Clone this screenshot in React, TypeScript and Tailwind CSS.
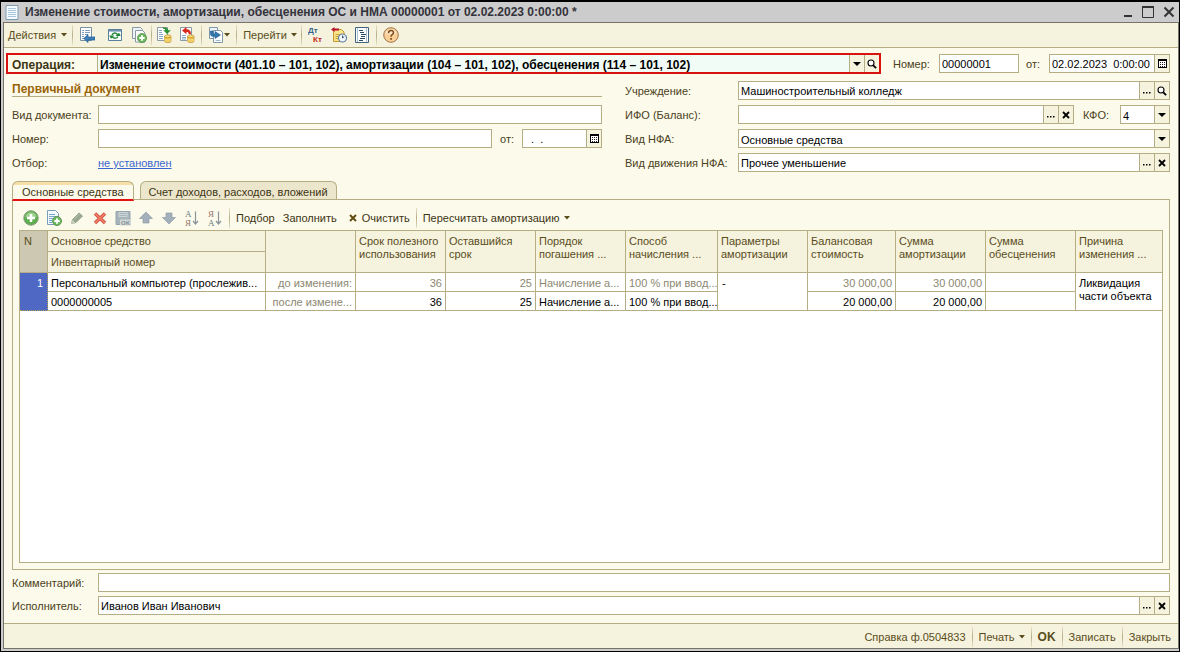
import type { ReactNode } from "react";

type Kids = { children?: ReactNode };

/* ---------- small glyphs ---------- */

const Caret = () => (
  <svg width="6" height="4" viewBox="0 0 6 4" className="shrink-0" aria-hidden="true">
    <path d="M0 0h6L3 3.6z" fill="#594d1c" />
  </svg>
);

const DropGlyph = () => (
  <svg width="8" height="4" viewBox="0 0 8 4" aria-hidden="true">
    <path d="M0 0h8L4 4z" fill="#000" />
  </svg>
);

const MagnifierGlyph = () => (
  <svg width="10" height="10" viewBox="0 0 10 10" aria-hidden="true">
    <circle cx="4" cy="4" r="3" fill="#fff" stroke="#000" strokeWidth="1.1" />
    <path d="M6.3 6.3l2.8 2.8" stroke="#000" strokeWidth="1.8" />
  </svg>
);

const CrossGlyph = ({ color = "#000" }: { color?: string }) => (
  <svg width="8" height="8" viewBox="0 0 8 8" aria-hidden="true">
    <path d="M1 1l6 6M7 1L1 7" stroke={color} strokeWidth="1.8" />
  </svg>
);

const DotsGlyph = () => (
  <svg width="8" height="8" viewBox="0 0 8 8" aria-hidden="true">
    <path d="M0 5h1.5v1.5H0zM3 5h1.5v1.5H3zM6 5h1.5v1.5H6z" fill="#000" />
  </svg>
);

const CalendarGlyph = () => (
  <svg width="9" height="9" viewBox="0 0 9 9" shapeRendering="crispEdges" aria-hidden="true">
    <path d="M0 0h9v9H0z" fill="#000" />
    <path d="M1 2h7v6H1z" fill="#fff" />
    <path
      d="M2 3h1v1H2zM4 3h1v1H4zM6 3h1v1H6zM2 5h1v1H2zM4 5h1v1H4zM6 5h1v1H6zM2 7h1v1H2zM4 7h1v1H4zM6 7h1v1H6z"
      fill="#222"
    />
  </svg>
);

/* ---------- toolbar icons ---------- */

const Icon = ({ children }: Kids) => (
  <svg width="16" height="16" viewBox="0 0 16 16" className="shrink-0" aria-hidden="true">
    {children}
  </svg>
);

const SheetIcon = () => (
  <svg width="14" height="15" viewBox="0 0 14 15" className="shrink-0" aria-hidden="true">
    <path d="M1 .5h12v14H1z" fill="#f4fafd" stroke="#7f9cb0" />
    <path d="M3 3.500h8M3 5.500h8M3 7.500h8M3 9.500h8M3 11.500h8" stroke="#a9c6da" />
  </svg>
);

const SaveCloseIcon = () => (
  <Icon>
    <path d="M1.500.500h11v13h-11z" fill="#fff" stroke="#7890a4" />
    <path d="M3 3.500h2M6 3.500h5M3 5.500h2M6 5.500h5M3 7.500h2M6 7.500h3M3 9.500h2M3 11.500h2" stroke="#7ea0bd" />
    <path d="M4.800 11.500L9 7.500v2.500h7v3H9v2.500z" fill="#3c7fb8" stroke="#1f5c93" strokeWidth=".7" />
  </Icon>
);

const RefreshIcon = () => (
  <Icon>
    <path d="M1.500 2.500h13v11h-13z" fill="#fff" stroke="#5a7f9c" />
    <path d="M1.500 2.500h13v1.500h-13z" fill="#7ea7c8" stroke="#5a7f9c" />
    <path d="M5 8C6 5.500 9 5.500 10.500 7.500M11 9.500c-1 2-4 2.300-5.500.5" fill="none" stroke="#23863b" strokeWidth="1.400" />
    <path d="M8.500 9h5.300L12 5.800zM2.200 8.500h5.300L4 11.800z" fill="#23863b" />
  </Icon>
);

const PlusBadge = () => (
  <>
    <circle cx="11" cy="11" r="4.500" fill="#6fb85f" stroke="#4b8a41" strokeWidth=".8" />
    <path d="M11 8.300v5.400M8.300 11h5.400" stroke="#fff" strokeWidth="1.800" />
  </>
);

const CopyAddIcon = () => (
  <Icon>
    <path d="M1.500.500h8l2 2v9h-10z" fill="#eef4f6" stroke="#8798a4" />
    <path d="M4.500 3.500h7l2.500 2.500v9H4.500z" fill="#fff" stroke="#8798a4" />
    <PlusBadge />
  </Icon>
);

const SheetAddIcon = () => (
  <Icon>
    <path d="M1.500.500h8l3 3v11h-11z" fill="#f4fafd" stroke="#7c9db8" />
    <path d="M3 4.500h6M3 6.500h7M3 8.500h4M3 10.500h3M3 12.500h3" stroke="#7ba6cc" />
    <PlusBadge />
  </Icon>
);

const Coins = () => (
  <>
    <path d="M8.500 9.500v4.500c0 2 6.500 2 6.500 0V9.500z" fill="#edc04a" stroke="#b88d28" strokeWidth=".7" />
    <path d="M8.500 11.500c0 1.700 6.500 1.700 6.500 0M8.500 13c0 1.700 6.500 1.700 6.500 0" fill="none" stroke="#fbe694" strokeWidth=".8" />
    <ellipse cx="11.750" cy="9.300" rx="3.250" ry="1.400" fill="#fbe07a" stroke="#b88d28" strokeWidth=".7" />
  </>
);

const PostIcon = () => (
  <Icon>
    <path d="M1.500.500h10v13h-10z" fill="#fff" stroke="#8b9aa6" />
    <path d="M3 3.500h3M3 5.500h3M3 7.500h4M3 9.500h4M3 11.500h4" stroke="#84a7c4" />
    <path d="M7 .300c3 0 5 1 5 3h2.800L11 7 7.300 3.300h2c0-1.200-1-1.600-2.300-1.600z" fill="#279232" />
    <Coins />
  </Icon>
);

const UnpostIcon = () => (
  <Icon>
    <path d="M1.500.500h11v13h-11z" fill="#fff" stroke="#8b9aa6" />
    <path d="M3 8.500h4M3 10.500h4M3 12h4" stroke="#84a7c4" />
    <path d="M3 3.500L7.500 0v2.300c3 0 4.500 1.500 4.500 5H9.700C9.700 5.500 9 5 7.500 5v2.300z" fill="#d92a1c" />
    <Coins />
  </Icon>
);

const BasedOnIcon = () => (
  <Icon>
    <path d="M1.500.500h8v11h-8z" fill="#eef5fa" stroke="#7f95a8" />
    <path d="M5.500 3.500h7l2 2v10h-9z" fill="#fff" stroke="#7f95a8" />
    <path d="M7.500 13.500h5" stroke="#9bb9d1" />
    <path d="M2.500 4v3c0 1.500 1 2.300 3 2.300h1.500v2.200L12.500 8 7 4.500V7H6c-.8 0-1-.3-1-1V4z" fill="#2f77b0" stroke="#1c578b" strokeWidth=".6" />
  </Icon>
);

const DebitCreditIcon = () => (
  <Icon>
    <text x="0" y="6" fontSize="8" fontWeight="700" fontFamily="Liberation Sans, sans-serif" fill="#33658f">Дт</text>
    <text x="5" y="15" fontSize="8" fontWeight="700" fontFamily="Liberation Sans, sans-serif" fill="#c42b18">Кт</text>
  </Icon>
);

const MovementsIcon = () => (
  <Icon>
    <path d="M2.500 2.500h8l2.500 2.500v9.500H2.500z" fill="#fbe38a" stroke="#c39a32" />
    <path d="M4.500 7.500h5M4.500 9.500h3M4.500 11.500h3" stroke="#c9a23c" />
    <path d="M0 2.500L3.500 0v1.500H8v2H3.500V5z" fill="#b5122a" />
    <circle cx="11.500" cy="11" r="4" fill="#f5fbff" stroke="#61809c" strokeWidth="1.200" />
    <path d="M11.500 8.500V11l1.800-1.500" fill="none" stroke="#34536e" />
  </Icon>
);

const StructureIcon = () => (
  <Icon>
    <path d="M1.500.500h13v15h-13z" fill="#fff" stroke="#41637e" />
    <path d="M3.500 1v14M12.500 1v14" stroke="#a9c3d6" />
    <path d="M5 3.500h4M6 5.500h4M7 7.500h5M7 9.500h4M6 11.500h5M5 13.500h4" stroke="#2b4c66" />
  </Icon>
);

const HelpIcon = () => (
  <Icon>
    <circle cx="8" cy="8" r="7.300" fill="#f9cf97" stroke="#a3744a" />
    <path d="M2.500 6.500a5.700 5.700 0 0 1 11 0c-3 1.300-8 1.300-11 0z" fill="#fde6c6" />
    <path d="M5.500 6.200C5.500 4.500 6.600 3.600 8 3.600s2.500.9 2.500 2.200C10.500 7.500 8 7.500 8 9.800" fill="none" stroke="#7d4a1c" strokeWidth="1.500" />
    <path d="M7.200 11h1.700v1.700H7.200z" fill="#7d4a1c" />
  </Icon>
);

const AddIcon = () => (
  <Icon>
    <circle cx="8" cy="8" r="7.200" fill="#5fae4e" stroke="#7f9a78" />
    <path d="M2.300 7a5.800 5.800 0 0 1 11.400 0c-3 1.300-8.400 1.300-11.400 0z" fill="#9dd08c" />
    <path d="M8 4v8M4 8h8" stroke="#fff" strokeWidth="2.600" />
  </Icon>
);

const PencilIcon = () => (
  <Icon>
    <path d="M2.500 13.500l1-4L10 3l3.500 3L7 12.500z" fill="#98a78f" stroke="#879580" strokeWidth=".8" />
    <path d="M2 14l1.500-4.200L6.500 13z" fill="#c9cfbd" />
    <path d="M5 9.500L10.500 4" stroke="#bcc7b2" />
  </Icon>
);

const DeleteIcon = () => (
  <Icon>
    <path d="M3 3.500l10 9.500M13 3.500L3 13" stroke="#c8493a" strokeWidth="3.200" />
    <path d="M3.200 3.700l9.600 9.100M12.800 3.700L3.200 12.800" stroke="#f4806a" strokeWidth="1.600" />
  </Icon>
);

const SaveRowIcon = () => (
  <Icon>
    <path d="M1 1.500h14v13H1z" fill="#a6b4bb" stroke="#94a4ad" />
    <path d="M3.500 2h9v5h-9z" fill="#cdd5d6" />
    <path d="M4.500 3.500h7M4.500 5.500h7" stroke="#a6b4bb" />
    <path d="M5 9.500h11v6H5z" fill="#d3d8d3" />
    <text x="6" y="15" fontSize="6" fontWeight="700" fontFamily="Liberation Sans, sans-serif" fill="#82939e">OK</text>
  </Icon>
);

const UpIcon = () => (
  <Icon>
    <path d="M8 2l6.500 6.500H11V13H5V8.500H1.500z" fill="#a3b0bb" stroke="#8f9ea8" strokeWidth=".7" />
  </Icon>
);

const DownIcon = () => (
  <Icon>
    <path d="M8 14l6.500-6.500H11V3H5v4.500H1.500z" fill="#a3b0bb" stroke="#8f9ea8" strokeWidth=".7" />
  </Icon>
);

const SortIcon = ({ top, bottom, a, b }: { top: string; bottom: string; a: string; b: string }) => (
  <Icon>
    <text x="1" y="7" fontSize="9" fontFamily="Liberation Serif, serif" fill={a}>{top}</text>
    <text x="1" y="15.500" fontSize="9" fontFamily="Liberation Serif, serif" fill={b}>{bottom}</text>
    <path d="M11.500 1.500v12M9 11l2.500 3 2.500-3" fill="none" stroke="#8a959b" strokeWidth="1.200" />
  </Icon>
);

/* ---------- form parts ---------- */

const Sep = () => (
  <div className="h-5 w-px shrink-0 bg-gradient-to-b from-[#e6e1c6] via-[#b5ad88] to-[#e6e1c6]" />
);

const IconButton = ({ label, children }: Kids & { label: string }) => (
  <button type="button" aria-label={label} className="flex h-5 shrink-0 items-center justify-center">
    {children}
  </button>
);

const TextButton = ({ children }: Kids) => (
  <button type="button" className="flex h-5 shrink-0 items-center whitespace-nowrap">
    {children}
  </button>
);

const FieldButton = ({ label, children }: Kids & { label: string }) => (
  <button
    type="button"
    aria-label={label}
    className="flex w-[15px] shrink-0 items-center justify-center border-l border-[#b5ad84] bg-[#f5f2dd]"
  >
    {children}
  </button>
);

const Field = ({
  id,
  value = "",
  className = "",
  children,
}: Kids & { id: string; value?: string; className?: string }) => (
  <div className={`flex h-[19px] min-w-0 border border-[#b5ad84] bg-white ${className}`}>
    <input id={id} defaultValue={value} className="w-0 min-w-0 flex-1 bg-transparent px-0.5 pt-0.5 text-black outline-none" />
    {children}
  </div>
);

const SelectField = ({
  id,
  value,
  className = "",
}: {
  id: string;
  value: string;
  className?: string;
}) => (
  <div className={`flex h-[19px] min-w-0 border border-[#b5ad84] bg-white ${className}`}>
    <select id={id} className="w-0 min-w-0 flex-1 appearance-none bg-transparent px-0.5 pt-0.5 text-black outline-none">
      <option>{value}</option>
    </select>
    <FieldButton label="Открыть список">
      <DropGlyph />
    </FieldButton>
  </div>
);

const Label = ({ id, className = "", children }: Kids & { id: string; className?: string }) => (
  <label htmlFor={id} className={`shrink-0 pt-0.5 whitespace-nowrap ${className}`}>
    {children}
  </label>
);

/* ---------- table ---------- */

const HEAD = "border-r border-b border-[#b5ad84] bg-[#f5f2dd] px-[3px] pt-1 text-left align-top font-normal leading-[13px] last:border-r-0";
const CELL = "whitespace-nowrap border-r border-b border-[#b5ad84] px-[3px] pt-0.5 leading-4 text-black";
const OLD = "whitespace-nowrap border-r border-b border-[#b5ad84] px-[3px] pt-0.5 leading-4 text-[#8c8871]";

const headings: [string, string][] = [
  ["Срок полезного", "использования"],
  ["Оставшийся", "срок"],
  ["Порядок", "погашения ..."],
  ["Способ", "начисления ..."],
  ["Параметры", "амортизации"],
  ["Балансовая", "стоимость"],
  ["Сумма", "амортизации"],
  ["Сумма", "обесценения"],
  ["Причина", "изменения ..."],
];

const AssetsTable = () => (
  <table className="w-full table-fixed border-separate border-spacing-0">
    <colgroup>
      <col className="w-[28px]" />
      <col />
      <col className="w-[90px]" />
      <col className="w-[90px]" />
      <col className="w-[90px]" />
      <col className="w-[90px]" />
      <col className="w-[92px]" />
      <col className="w-[90px]" />
      <col className="w-[88px]" />
      <col className="w-[90px]" />
      <col className="w-[90px]" />
      <col className="w-[86px]" />
    </colgroup>
    <thead className="text-[#594d1c]">
      <tr className="h-[21px]">
        <th rowSpan={2} className="border-r border-b border-[#b5ad84] bg-[#cdc8b1] px-1 pt-1 text-left align-top leading-[13px] font-normal">
          N
        </th>
        <th className={HEAD}>Основное средство</th>
        <th rowSpan={2} className={HEAD} />
        {headings.map(([a, b], i) => (
          <th key={i} rowSpan={2} className={HEAD}>
            {a}
            <br />
            {b}
          </th>
        ))}
      </tr>
      <tr className="h-[21px]">
        <th className="border-r border-b border-[#b5ad84] bg-[#f5f2dd] px-[3px] pt-1 text-left align-top leading-[13px] font-normal">
          Инвентарный номер
        </th>
      </tr>
    </thead>
    <tbody>
      <tr>
        <td rowSpan={2} className="border-r border-b border-dotted border-[#b5a04e] bg-[#4f68c4] px-1 pt-0.5 text-right align-top leading-4 text-white">
          1
        </td>
        <td className={CELL}>Персональный компьютер (прослежив...</td>
        <td className={`${OLD} text-right`}>до изменения:</td>
        <td className={`${OLD} text-right`}>36</td>
        <td className={`${OLD} text-right`}>25</td>
        <td className={OLD}>Начисление а...</td>
        <td className={OLD}>100 % при ввод...</td>
        <td rowSpan={2} className="border-r border-b border-[#b5ad84] px-1 pt-0.5 align-top leading-4 text-black">-</td>
        <td className={`${OLD} text-right`}>30 000,00</td>
        <td className={`${OLD} text-right`}>30 000,00</td>
        <td className={OLD} />
        <td rowSpan={2} className="border-b border-[#b5ad84] px-[3px] pt-1 align-top leading-[13px] text-black">
          Ликвидация части объекта
        </td>
      </tr>
      <tr>
        <td className={CELL}>0000000005</td>
        <td className={`${OLD} text-right`}>после измене...</td>
        <td className={`${CELL} text-right`}>36</td>
        <td className={`${CELL} text-right`}>25</td>
        <td className={CELL}>Начисление а...</td>
        <td className={CELL}>100 % при ввод...</td>
        <td className={`${CELL} text-right`}>20 000,00</td>
        <td className={`${CELL} text-right`}>20 000,00</td>
        <td className={CELL} />
      </tr>
    </tbody>
  </table>
);

/* ---------- window ---------- */

const TitleBar = () => (
  <header className="flex h-5 shrink-0 items-center pr-1 pl-0.5">
    <SheetIcon />
    <h1 className="ml-1.5 flex-1 truncate text-xs font-bold text-[#33333b]">
      Изменение стоимости, амортизации, обесценения ОС и НМА 00000001 от 02.02.2023 0:00:00 *
    </h1>
    <div className="flex items-center gap-[9px]">
      <button type="button" aria-label="Свернуть">
        <svg width="10" height="12" viewBox="0 0 10 12"><path d="M1 9h8v2H1z" fill="#333" /></svg>
      </button>
      <button type="button" aria-label="Развернуть">
        <svg width="12" height="12" viewBox="0 0 12 12"><path d="M.5.500h11v11H.5z" fill="none" stroke="#333" /><path d="M0 1h12" stroke="#333" strokeWidth="2" /></svg>
      </button>
      <button type="button" aria-label="Закрыть окно">
        <svg width="12" height="12" viewBox="0 0 12 12"><path d="M1.500 1.500l9 9M10.500 1.500l-9 9" stroke="#333" strokeWidth="2" /></svg>
      </button>
    </div>
  </header>
);

const MainToolbar = () => (
  <nav className="flex h-[25px] shrink-0 items-center border-b border-[#b5ad84] bg-[#f5f2dd] pl-1 text-[#594d1c]">
    <TextButton>
      <span className="mr-[5px]">Действия</span>
      <Caret />
    </TextButton>
    <div className="ml-[5px] flex items-center">
      <Sep />
      <div className="ml-1.5 flex items-center gap-3">
        <IconButton label="Записать и закрыть"><SaveCloseIcon /></IconButton>
        <div className="flex items-center gap-2">
          <IconButton label="Перечитать"><RefreshIcon /></IconButton>
          <IconButton label="Скопировать"><CopyAddIcon /></IconButton>
        </div>
      </div>
      <div className="mx-1"><Sep /></div>
      <div className="flex items-center gap-[7px]">
        <IconButton label="Провести"><PostIcon /></IconButton>
        <IconButton label="Отменить проведение"><UnpostIcon /></IconButton>
      </div>
      <div className="mx-1.5"><Sep /></div>
      <IconButton label="Ввести на основании">
        <BasedOnIcon />
        <Caret />
      </IconButton>
      <div className="mx-1.5"><Sep /></div>
      <TextButton>
        <span className="mr-1">Перейти</span>
        <Caret />
      </TextButton>
      <div className="mr-1.5 ml-1"><Sep /></div>
      <div className="flex items-center gap-[7px]">
        <IconButton label="Проводки"><DebitCreditIcon /></IconButton>
        <IconButton label="Движения документа"><MovementsIcon /></IconButton>
        <IconButton label="Структура подчиненности"><StructureIcon /></IconButton>
      </div>
      <div className="mx-1.5"><Sep /></div>
      <IconButton label="Справка"><HelpIcon /></IconButton>
    </div>
  </nav>
);

const TableToolbar = () => (
  <div className="mb-px flex h-[22px] items-center pl-1 text-[#3d3514]">
    <div className="flex items-center gap-[7px]">
      <IconButton label="Добавить"><AddIcon /></IconButton>
      <IconButton label="Добавить копированием"><SheetAddIcon /></IconButton>
      <IconButton label="Изменить"><PencilIcon /></IconButton>
      <IconButton label="Удалить"><DeleteIcon /></IconButton>
      <IconButton label="Закончить редактирование"><SaveRowIcon /></IconButton>
      <IconButton label="Переместить вверх"><UpIcon /></IconButton>
      <IconButton label="Переместить вниз"><DownIcon /></IconButton>
      <IconButton label="Сортировать по возрастанию"><SortIcon top="А" bottom="Я" a="#6d7a82" b="#94776c" /></IconButton>
      <IconButton label="Сортировать по убыванию"><SortIcon top="Я" bottom="А" a="#94776c" b="#6d7a82" /></IconButton>
    </div>
    <div className="mx-1.5"><Sep /></div>
    <div className="flex items-center gap-2">
      <TextButton>Подбор</TextButton>
      <TextButton>Заполнить</TextButton>
    </div>
    <div className="ml-3 flex">
      <TextButton>
        <CrossGlyph color="#5c4a0c" />
        <span className="ml-[5px]">Очистить</span>
      </TextButton>
    </div>
    <div className="mx-1.5"><Sep /></div>
    <TextButton>
      <span className="mr-1">Пересчитать амортизацию</span>
      <Caret />
    </TextButton>
  </div>
);

export default function App() {
  return (
    <div className="flex min-h-screen flex-col border border-t-2 border-black bg-[#cccccc] pb-0.5 pl-0.5 font-['Liberation_Sans',Arial,sans-serif] text-[11px] text-[#4a4120]">
      <TitleBar />
      <div className="flex flex-1 flex-col border border-[#77736a] bg-[#fcfaeb]">
        <MainToolbar />

        <main className="flex flex-1 flex-col px-2 pt-[5px]">
          <div className="-ml-1.5 flex h-[21px] items-center">
            <div className="flex h-[21px] flex-1 items-stretch border-2 border-[#d8120f] pl-1">
              <label htmlFor="operation" className="w-[85px] shrink-0 self-center pt-0.5 text-xs font-bold text-[#3d3514]">
                Операция:
              </label>
              <select
                id="operation"
                className="w-0 min-w-0 flex-1 appearance-none border-l border-[#b5ad84] bg-[#f1fcf6] px-0.5 pt-0.5 text-xs font-bold text-black outline-none"
              >
                <option>Изменение стоимости (401.10 – 101, 102), амортизации (104 – 101, 102), обесценения (114 – 101, 102)</option>
              </select>
              <FieldButton label="Открыть список"><DropGlyph /></FieldButton>
              <FieldButton label="Открыть операцию"><MagnifierGlyph /></FieldButton>
            </div>
            <Label id="number" className="ml-3 w-[46px]">Номер:</Label>
            <Field id="number" value="00000001" className="w-[80px]" />
            <Label id="date" className="ml-[7px] w-[23px]">от:</Label>
            <Field id="date" value="02.02.2023  0:00:00" className="w-[121px]">
              <FieldButton label="Выбрать дату"><CalendarGlyph /></FieldButton>
            </Field>
          </div>

          <div className="mt-[7px] grid grid-cols-[590fr_545fr] gap-x-[23px]">
            <div className="flex flex-col gap-[5px]">
              <div className="h-[19px]">
                <h2 className="h-4 border-b border-[#b5ad84] pt-px text-xs leading-[15px] font-bold text-[#9a6408]">
                  Первичный документ
                </h2>
              </div>
              <div className="flex items-center">
                <Label id="doc-kind" className="w-[86px]">Вид документа:</Label>
                <Field id="doc-kind" className="flex-1" />
              </div>
              <div className="flex items-center">
                <Label id="doc-number" className="w-[86px]">Номер:</Label>
                <Field id="doc-number" className="flex-1" />
                <Label id="doc-date" className="ml-2 w-[22px]">от:</Label>
                <Field id="doc-date" value="  .  ." className="w-[80px]">
                  <FieldButton label="Выбрать дату документа"><CalendarGlyph /></FieldButton>
                </Field>
              </div>
              <div className="flex h-[19px] items-center pt-0.5">
                <span className="w-[86px]">Отбор:</span>
                <a href="#filter" className="text-[#3a66d0] underline">не установлен</a>
              </div>
            </div>

            <div className="flex flex-col gap-[5px]">
              <div className="flex items-center">
                <Label id="org" className="w-[113px]">Учреждение:</Label>
                <Field id="org" value="Машиностроительный колледж" className="flex-1">
                  <FieldButton label="Выбрать учреждение"><DotsGlyph /></FieldButton>
                  <FieldButton label="Открыть учреждение"><MagnifierGlyph /></FieldButton>
                </Field>
              </div>
              <div className="flex items-center">
                <Label id="ifo" className="w-[113px]">ИФО (Баланс):</Label>
                <Field id="ifo" className="flex-1">
                  <FieldButton label="Выбрать ИФО"><DotsGlyph /></FieldButton>
                  <FieldButton label="Очистить ИФО"><CrossGlyph /></FieldButton>
                </Field>
                <Label id="kfo" className="ml-[9px] w-[37px]">КФО:</Label>
                <SelectField id="kfo" value="4" className="w-[50px]" />
              </div>
              <div className="flex items-center">
                <Label id="nfa" className="w-[113px]">Вид НФА:</Label>
                <SelectField id="nfa" value="Основные средства" className="flex-1" />
              </div>
              <div className="flex items-center">
                <Label id="move" className="w-[113px]">Вид движения НФА:</Label>
                <Field id="move" value="Прочее уменьшение" className="flex-1">
                  <FieldButton label="Выбрать вид движения"><DotsGlyph /></FieldButton>
                  <FieldButton label="Очистить вид движения"><CrossGlyph /></FieldButton>
                </Field>
              </div>
            </div>
          </div>

          <div role="tablist" className="mt-[9px] flex items-end gap-1.5 text-[#3d3514]">
            <button
              type="button"
              role="tab"
              aria-selected="true"
              className="z-10 -mb-0.5 h-5 rounded-t-md border border-b-2 border-[#b5ad84] border-b-[#e01212] bg-gradient-to-b from-[#f8dfa8] from-15% to-[#fcfaeb] to-20% px-[9px] pt-0.5"
            >
              Основные средства
            </button>
            <button
              type="button"
              role="tab"
              aria-selected="false"
              className="h-[18px] rounded-t-md border border-b-0 border-[#b5ad84] bg-[#ece6cd] px-2 pt-0.5"
            >
              Счет доходов, расходов, вложений
            </button>
          </div>

          <section className="flex flex-1 flex-col border border-[#b5ad84] px-1.5 pt-[7px] pb-1.5">
            <TableToolbar />
            <div className="flex-1 border border-[#b5ad84] bg-white">
              <AssetsTable />
            </div>
          </section>

          <div className="mt-[3px] flex flex-col gap-1 pb-2">
            <div className="flex items-center">
              <Label id="comment" className="w-[86px]">Комментарий:</Label>
              <Field id="comment" className="flex-1" />
            </div>
            <div className="flex items-center">
              <Label id="author" className="w-[86px]">Исполнитель:</Label>
              <Field id="author" value="Иванов Иван Иванович" className="flex-1">
                <FieldButton label="Выбрать исполнителя"><DotsGlyph /></FieldButton>
                <FieldButton label="Очистить исполнителя"><CrossGlyph /></FieldButton>
              </Field>
            </div>
          </div>
        </main>

        <footer className="flex h-[25px] shrink-0 items-center justify-end gap-1.5 border-t border-[#b5ad84] bg-[#f5f2dd] pt-0.5 pr-[7px] text-[#594d1c]">
          <TextButton>Справка ф.0504833</TextButton>
          <Sep />
          <TextButton>
            <span className="mr-1">Печать</span>
            <Caret />
          </TextButton>
          <Sep />
          <TextButton><b className="text-xs">OK</b></TextButton>
          <Sep />
          <TextButton>Записать</TextButton>
          <Sep />
          <TextButton>Закрыть</TextButton>
        </footer>
      </div>
    </div>
  );
}
